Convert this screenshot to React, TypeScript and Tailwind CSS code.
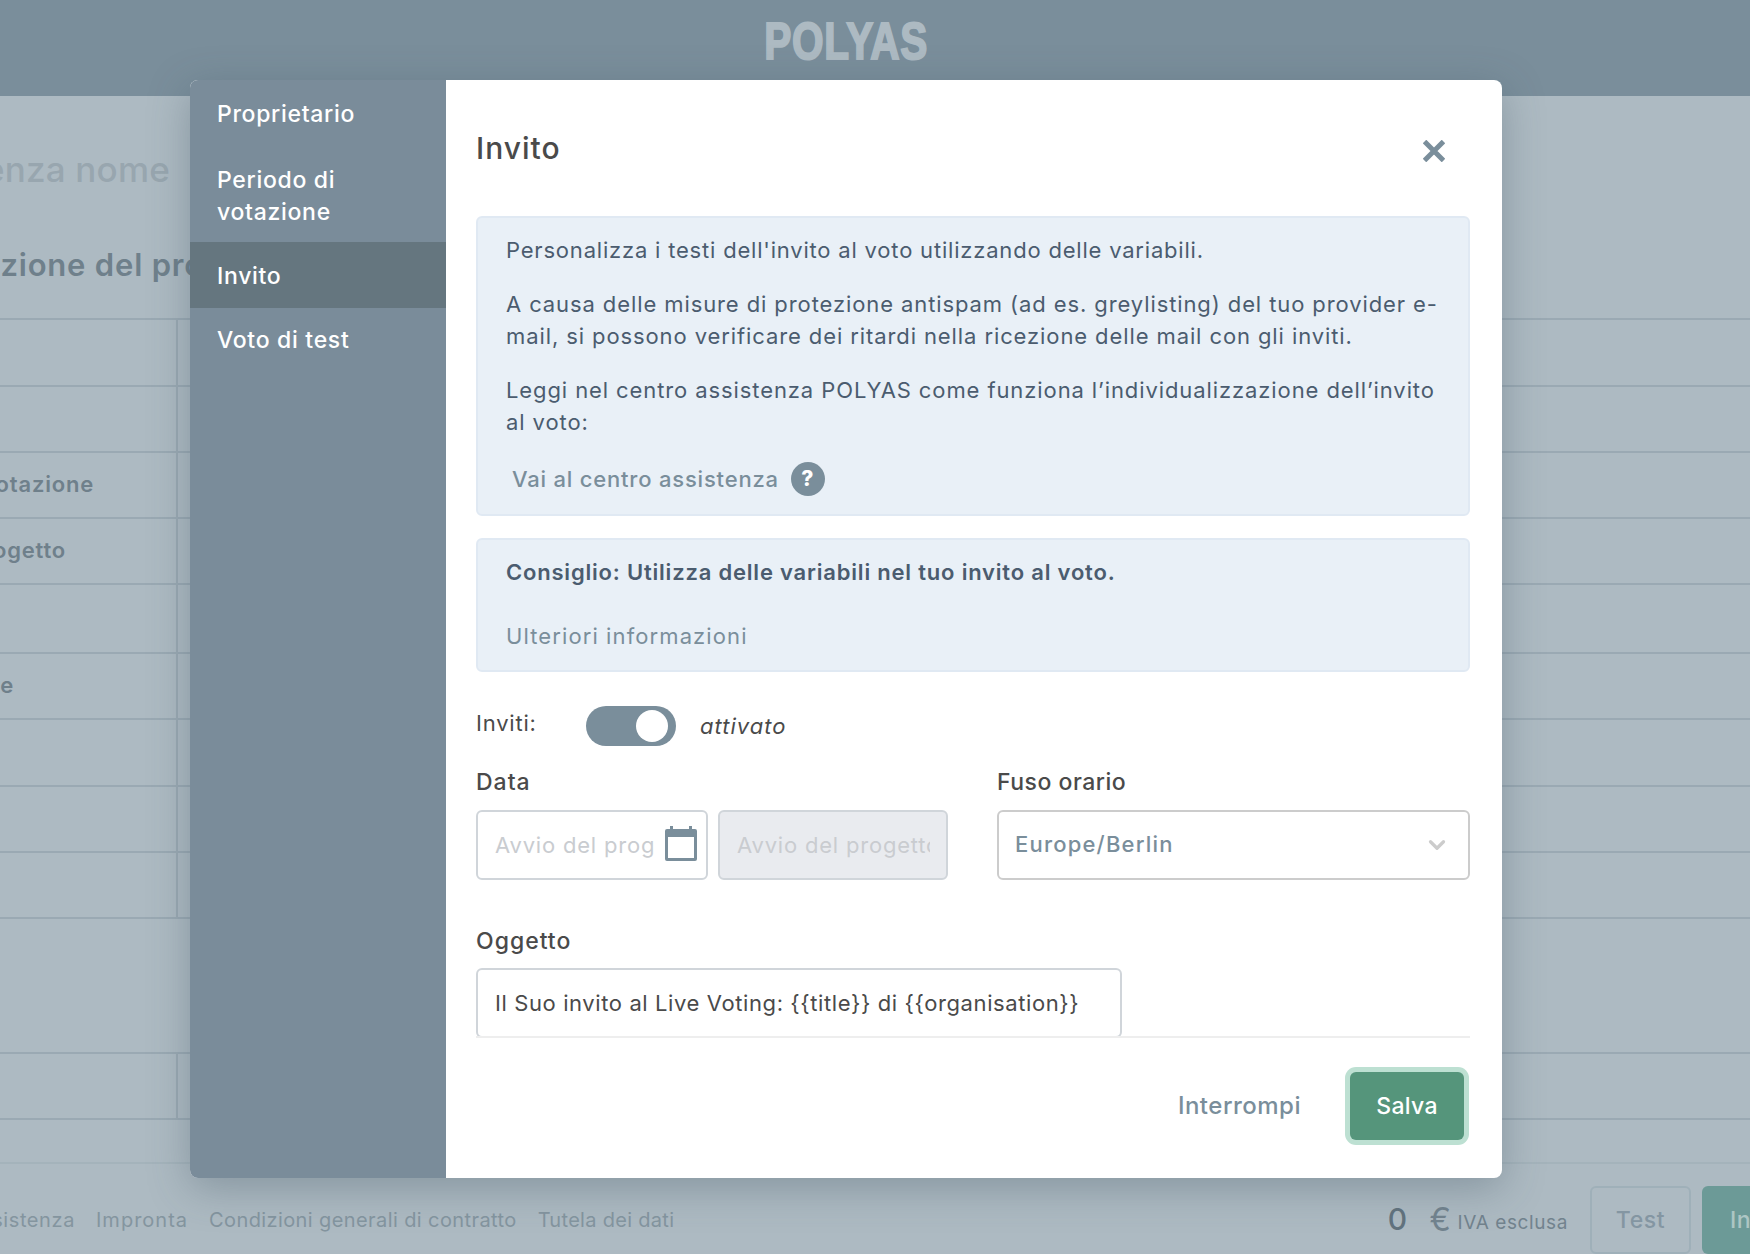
import { ChevronDown } from "lucide-react";

const rows = [
  { h: "h-[67px]", label: "", w: "w-[10px]" },
  { h: "h-[66px]", label: "", w: "w-[10px]" },
  { h: "h-[66px]", label: "Periodo di votazione", w: "w-[94px]" },
  { h: "h-[66px]", label: "Nome del progetto", w: "w-[66px]" },
  { h: "h-[69px]", label: "", w: "w-[10px]" },
  { h: "h-[66px]", label: "Valore", w: "w-[14px]" },
  { h: "h-[67px]", label: "", w: "w-[10px]" },
  { h: "h-[66px]", label: "", w: "w-[10px]" },
  { h: "h-[66px]", label: "", w: "w-[10px]" },
];

function Row({ h, label, w }: { h: string; label: string; w: string }) {
  return (
    <div className={`${h} flex border-b-2 border-[#9aa9b3]`}>
      <div className="w-[178px] flex items-center border-r-2 border-[#9aa9b3]">
        <span className={`${w} flex justify-end overflow-hidden whitespace-nowrap text-[22px] tracking-[0.8px] font-semibold text-[#6f808b]`}>
          {label}
        </span>
      </div>
    </div>
  );
}

function Background() {
  return (
    <div className="h-[1254px] w-[1750px] flex flex-col bg-[#adbac2]">
      <header className="h-[96px] shrink-0 bg-[#7a8e9b]">
        <div className="w-[1692px] flex justify-center">
          <span className="mt-[13px] h-[56px] scale-x-[0.78] font-['Liberation_Sans',sans-serif] text-[52px] leading-[56px] font-bold tracking-[1px] text-[#adbac2] [-webkit-text-stroke:2px_#adbac2]">
            POLYAS
          </span>
        </div>
      </header>
      <div className="mt-[44px] h-[58px] w-[170px] flex justify-end items-center overflow-hidden whitespace-nowrap text-[35px] font-medium tracking-[0.2px] text-[#98a6af]">
        Senza nome
      </div>
      <div className="mt-[48px] h-[40px] w-[190px] flex items-center overflow-hidden whitespace-nowrap text-[31px] tracking-[0.8px] font-semibold text-[#6f808b]">
        <span className="-ml-[156px]">Configurazione del progetto</span>
      </div>
      <div className="mt-[32px] border-t-2 border-[#9aa9b3]">
        {rows.map((r, i) => (
          <Row key={i} {...r} />
        ))}
      </div>
      <div className="h-[136px] border-b-2 border-[#9aa9b3]" />
      <Row h="h-[66px]" label="" w="w-[10px]" />
      <footer className="mt-[42px] flex-1 flex items-center border-t-2 border-[#a4b3bb] pt-[22px] text-[20px] tracking-[0.6px] text-[#84959f]">
        <div className="flex items-center gap-[21px]">
          <span className="w-[75px] flex justify-end overflow-hidden whitespace-nowrap">Centro assistenza</span>
          <span className="tracking-[1px]">Impronta</span>
          <span className="tracking-[0.4px]">Condizioni generali di contratto</span>
          <span className="tracking-[0.3px]">Tutela dei dati</span>
        </div>
        <div className="ml-auto -mr-[92px] flex items-center">
          <span className="text-[30px] font-medium text-[#62737e]">0</span>
          <span className="ml-[22px] text-[32px] text-[#72838e]">€</span>
          <span className="ml-[6px] mt-[6px] text-[19px] text-[#72838e]">IVA esclusa</span>
          <div className="ml-[22px] h-[68px] w-[101px] flex items-center justify-center rounded-md border-2 border-[#9fb0b9] text-[23px] font-medium text-[#8496a2]">
            Test
          </div>
          <div className="ml-[11px] h-[68px] w-[140px] flex items-center rounded-md bg-[#6c9a97] pl-[28px] text-[23px] font-medium text-[#adc6c4]">
            Invia
          </div>
        </div>
      </footer>
    </div>
  );
}

function Sidebar() {
  return (
    <nav className="w-[256px] shrink-0 bg-[#7a8c9a] pt-[2px] text-[23px] tracking-[0.7px] leading-[32px] font-medium text-white">
      <div className="px-[27px] py-[16px]">Proprietario</div>
      <div className="px-[27px] pt-[18px] pb-[14px]">Periodo di votazione</div>
      <div className="px-[27px] pt-[18px] pb-[16px] bg-[#65767f]">Invito</div>
      <div className="px-[27px] py-[16px]">Voto di test</div>
    </nav>
  );
}

function CalendarIcon() {
  return (
    <svg viewBox="0 0 32 35" className="w-[32px] h-[35px] text-[#7a8e9b]" fill="currentColor">
      <rect x="5" y="0" width="3" height="6" />
      <rect x="24" y="0" width="3" height="6" />
      <path fillRule="evenodd" d="M2 3h28a2 2 0 0 1 2 2v28a2 2 0 0 1-2 2H2a2 2 0 0 1-2-2V5a2 2 0 0 1 2-2zM3 11v21h26V11z" />
    </svg>
  );
}

function InviteForm() {
  return (
    <div className="h-[958px] overflow-hidden border-b-2 border-[#eeeeee] pt-[48px] text-[22px] tracking-[0.8px]">
      <div className="flex h-[40px] items-center justify-between mb-[48px]">
        <h2 className="text-[30px] tracking-[1px] font-medium text-[#4a4a4a]">Invito</h2>
        <svg viewBox="0 0 22 22" className="mr-[25px] mt-[6px] w-[22px] h-[22px] text-[#7a8e9b]" stroke="currentColor" strokeWidth="5">
          <path d="M1.5 1.5l19 19M20.5 1.5l-19 19" />
        </svg>
      </div>

      <div className="h-[300px] rounded-md border-2 border-[#e0e9f3] bg-[#e9f0f7] pl-[28px] pt-[16px] leading-[32px] text-[#4b5c6f]">
        <p className="mb-[22px]">Personalizza i testi dell'invito al voto utilizzando delle variabili.</p>
        <p className="mb-[22px] tracking-[0.9px]">
          A causa delle misure di protezione antispam (ad es. greylisting) del tuo provider e-
          <br />
          mail, si possono verificare dei ritardi nella ricezione delle mail con gli inviti.
        </p>
        <p className="tracking-[0.9px]">
          Leggi nel centro assistenza POLYAS come funziona l’individualizzazione dell’invito
          <br />
          al voto:
        </p>
        <div className="mt-[24px] ml-[6px] flex items-center gap-[12px] font-medium text-[#7a8e9b]">
          <span>Vai al centro assistenza</span>
          <span className="w-[34px] h-[34px] rounded-full bg-[#7a8e9b] flex items-center justify-center text-[21px] font-extrabold text-white">
            ?
          </span>
        </div>
      </div>

      <div className="mt-[22px] h-[134px] rounded-md border-2 border-[#e0e9f3] bg-[#e9f0f7] pl-[28px] pt-[16px] leading-[32px]">
        <p className="font-semibold text-[#4b5c6f]">Consiglio: Utilizza delle variabili nel tuo invito al voto.</p>
        <p className="mt-[32px] tracking-[1.1px] text-[#7a8e9b]">Ulteriori informazioni</p>
      </div>

      <div className="mt-[34px] flex h-[40px] items-center">
        <span className="w-[110px] -mt-[6px] leading-[32px] text-[#4a4a4a]">Inviti:</span>
        <span className="h-[40px] w-[90px] rounded-full bg-[#7a8e9b] flex items-center justify-end pr-[8px]">
          <span className="w-[32px] h-[32px] rounded-full bg-white" />
        </span>
        <span className="ml-[24px] italic tracking-[1px] text-[#4a4a4a]">attivato</span>
      </div>

      <div className="mt-[20px] grid grid-cols-[472px_473px] gap-x-[49px]">
        <div>
          <div className="h-[32px] leading-[32px] text-[23px] tracking-[1px] font-medium text-[#4a4a4a]">Data</div>
          <div className="mt-[12px] flex gap-[10px]">
            <div className="relative">
              <input
                placeholder="Avvio del progetto"
                className="block h-[70px] w-[232px] rounded-md border-2 border-[#d0d5da] bg-white pl-[17px] pr-[52px] placeholder:text-[#c9ccd0]"
              />
              <span className="absolute right-[11px] top-[16px]">
                <CalendarIcon />
              </span>
            </div>
            <input
              disabled
              placeholder="Avvio del progetto"
              className="block h-[70px] w-[230px] rounded-md border-2 border-[#d0d5da] bg-[#e9ebef] pl-[17px] pr-[16px] placeholder:text-[#c9ccd0]"
            />
          </div>
        </div>
        <div>
          <div className="h-[32px] leading-[32px] text-[23px] tracking-[0.5px] font-medium text-[#4a4a4a]">Fuso orario</div>
          <div className="mt-[12px] h-[70px] flex items-center justify-between rounded-md border-2 border-[#cccccc] bg-white pl-[16px] pr-[18px] font-medium tracking-[1.2px] text-[#7a8e9b]">
            <span className="-mt-[2px]">Europe/Berlin</span>
            <ChevronDown className="w-[26px] h-[26px] text-[#cccccc]" strokeWidth={3} />
          </div>
        </div>
      </div>

      <div className="mt-[45px] h-[32px] leading-[32px] text-[23px] tracking-[1px] font-medium text-[#4a4a4a]">Oggetto</div>
      <input
        readOnly
        value="Il Suo invito al Live Voting: {{title}} di {{organisation}}"
        className="mt-[11px] block h-[70px] w-[646px] rounded-md border-2 border-[#d0d5da] bg-white pl-[17px] tracking-[0.6px] text-[#4a4a4a]"
      />
    </div>
  );
}

export default function App() {
  return (
    <div className="relative h-[1254px] w-[1750px] overflow-hidden font-['Inter',sans-serif]">
      <Background />
      {/* modal over the dimmed page */}
      <div className="absolute left-[190px] top-[80px] flex h-[1098px] w-[1312px] overflow-hidden rounded-lg bg-white shadow-[0_10px_40px_rgba(60,80,95,0.35)]">
        <Sidebar />
        <div className="flex-1 pl-[30px] pr-[32px]">
          <InviteForm />
          <div className="flex h-[140px] items-start justify-end pt-[34px] pr-[6px]">
            <button className="mr-[49px] h-[68px] text-[24px] tracking-[0.5px] font-medium text-[#7a8e9b]">Interrompi</button>
            <button className="h-[68px] w-[114px] rounded-md bg-[#55957b] text-[23px] tracking-[0.3px] font-medium text-white ring-[5px] ring-[#bde0d2]">
              Salva
            </button>
          </div>
        </div>
      </div>
    </div>
  );
}
